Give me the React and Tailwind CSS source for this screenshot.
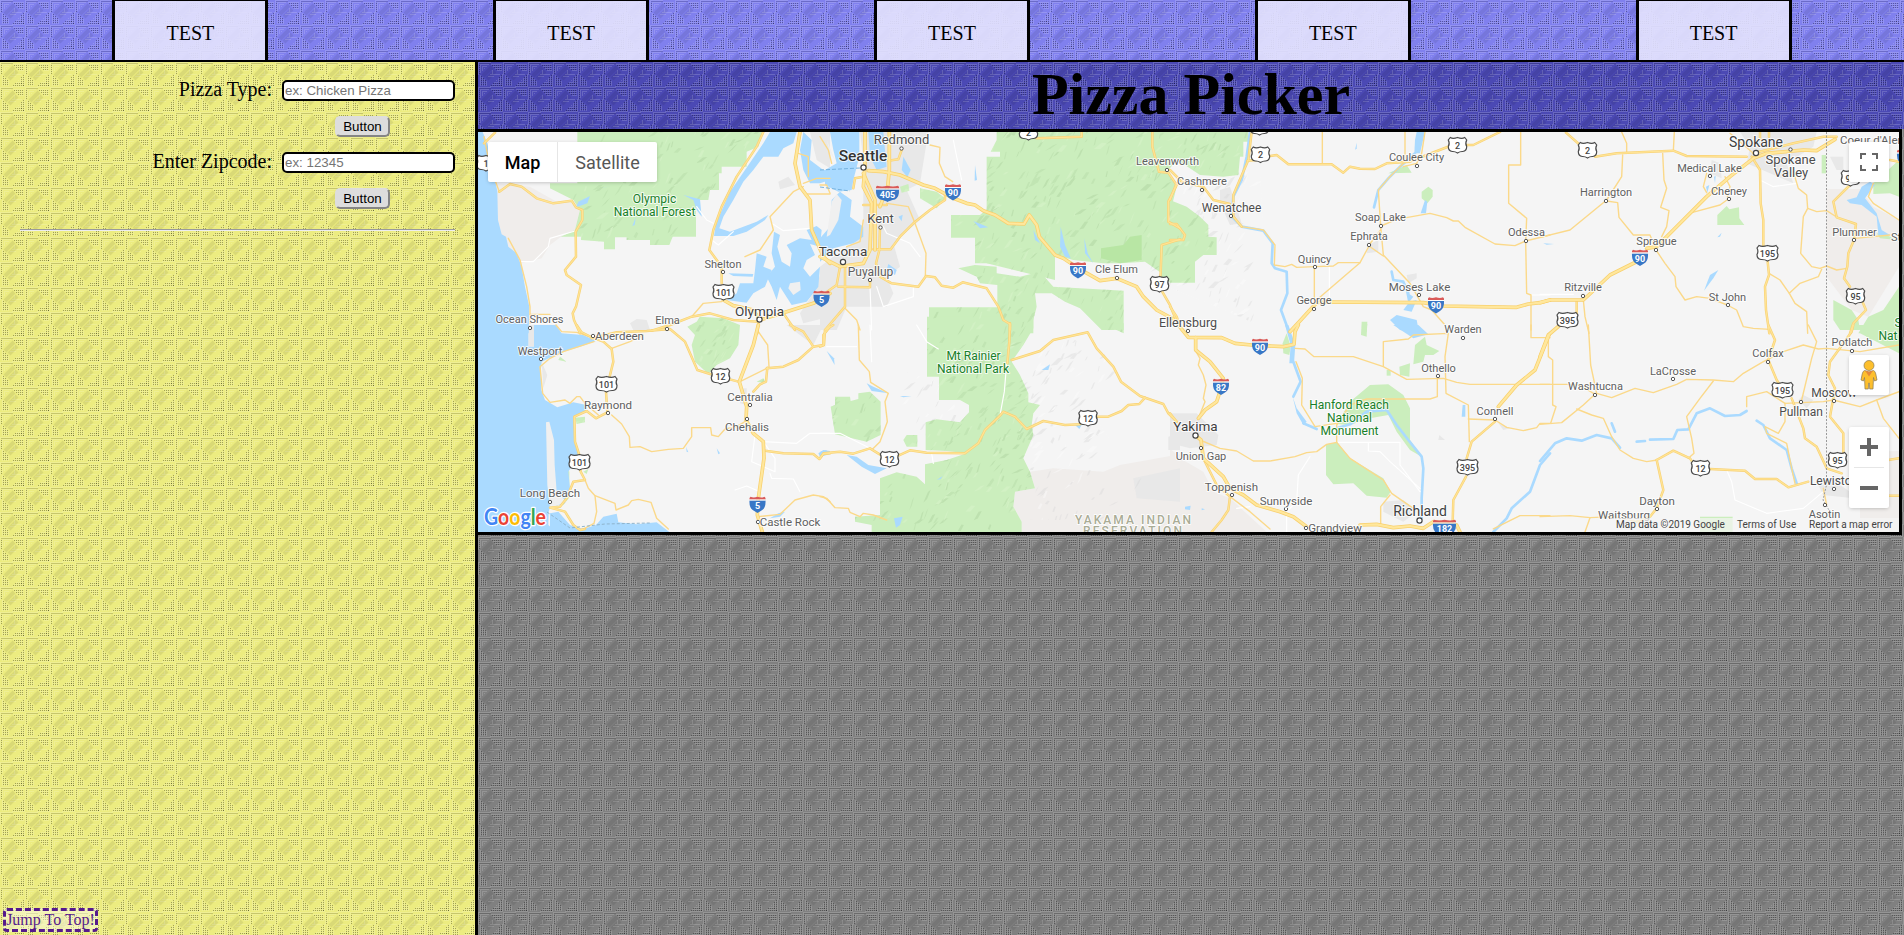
import React from "react";

// Map artwork is split into eight sheets; each sheet is drawn at 3x with its own origin.
const SHEETS = [
  {
    ox: 470, oy: 120,
    water: [
      "M0 36L38 36 52 70 70 150 82 215 84 300 95 343 108 350 115 380 140 400 155 440 165 500 178 560 176 640 0 640Z",
      "M900 36H980L970 70 940 85 925 110 880 110 850 150 820 185 790 240 760 290 748 325 780 335 860 305 895 285 885 300 830 335 790 348 732 348 738 310 780 215 825 150 880 70Z",
      "M912 335L930 345 922 380 935 425 960 440 965 400 950 375 990 355 1025 360 1010 330 1040 318 1055 330 1050 380 1020 372 1035 405 1010 420 1000 445 1020 470 1050 440 1045 500 1010 545 965 555 930 500 920 540 905 500 890 470 915 440 905 400Z",
      "M860 400L890 410 880 440 905 450 885 500 850 520 830 548 770 540 800 520 810 490 850 490 855 450Z",
      "M1000 36L1025 60 1020 120 1060 150 1080 150V180L1050 190 1020 190 1000 150 990 90Z",
      "M325 245L360 228 352 250 318 262Z", "M640 225L690 238 695 290 680 270 670 240Z", "M775 460L850 462 848 470 790 468Z",
      "M487 318L498 290 494 315Z", "M395 205L425 198 400 203Z",
    ],
    land: ["M960 490L990 485 992 510 970 525 955 505Z"],
    park: ["M322 36H880L865 80 830 95V140H755V160H747V210H720L715 240 678 240V350H608L598 375H540V360H470V352H435V388H402V365L333 360V350H272L315 330 330 270 310 240 240 205V190L322 190Z", "M965 460L990 445 1005 465 975 472Z"],
    tribe: ["M78 190L180 200 260 245 310 245 338 265 325 330 280 345 240 375 215 415 155 430 115 380 95 345 84 300Z"],
    urban: ["M1060 440L1080 430V590L1000 610 990 580 1030 520Z", "M925 185L955 170 975 195 930 208Z", "M480 610L500 597 530 600 540 630 490 630Z", "M1020 36L1080 36V145L1040 120Z"],
    high: ["M990 36L975 130 990 200 1020 240 1025 330 1060 410 1080 430", "M760 540L790 557 850 570 870 600 950 575 1030 550 1080 520"],
    major: ["M42 70L75 38", "M88 215L120 192 155 200 200 235 250 250 305 242 318 262 337 270V300L317 335 318 410 285 450 290 465 333 495 318 560 308 580 312 600 330 640", "M880 36L860 80 800 170 755 260 730 330 718 390 755 440V490", "M545 632L600 615 665 590 720 580 790 600 865 605", "M940 580L975 630", "M865 605L862 640"],
    minor: ["M42 50L60 140 88 215", "M115 355L150 420 170 500 180 560V610", "M825 410L870 390 910 330 900 290 970 215 1000 200", "M985 100L1015 110V170", "M1000 190L1040 175H1080", "M1010 222H1080", "M665 590L700 550 755 545", "M180 583L240 583"],
    local: ["M155 425L190 425 235 380 240 355 315 333", "M680 260L710 300 730 310", "M725 360L745 375 790 335", "M905 310L940 332 1020 325"],
  },
  {
    ox: 820, oy: 120,
    water: [
      "M30 36H118V110L100 180 95 210 55 215 15 195 15 150 50 130 40 90Z", "M0 355L30 320 35 240 60 215 95 240 90 290 130 320 130 350 100 370 40 385 0 425Z",
      "M145 36H190L195 90 200 140 170 150 150 110Z", "M250 110L272 150 262 172 245 150Z", "M722 320L735 375 752 415 735 410 720 380Z",
      "M793 355L803 400 820 430 795 400Z", "M460 303L505 322 480 325Z", "M235 290L248 284 245 304Z", "M205 432L230 450 225 465 200 450Z", "M640 330L660 370 645 360Z", "M465 135L471 180 464 182Z",
    ],
    land: ["M35 245L50 222 65 240 55 300 30 345 20 350Z", "M45 120L20 60 30 100Z"],
    park: [
      "M500 110H540V95H512L530 60V36H1080V110L1045 150 1070 200 1045 300 1080 320V360L1025 380V460L975 425 900 430 850 430 760 420 705 405V480L500 430V285Z",
      "M393 285H480L510 260V430H465V353H393Z",
      "M415 445L465 435 530 440 530 460 600 470 660 455 700 500 911 512V630H845L780 565 735 545 695 520 645 520 650 560 640 600V640H327V562H532V495L480 490 470 470Z",
      "M300 205L350 215 375 235 350 265 300 235Z", "M240 200L265 192 268 212 245 218Z", "M1022 375L1080 360V485H1022Z",
    ],
    dark: ["M843 385L910 375 930 350 965 345V420L900 430 843 415Z"],
    urban: ["M120 36H325L300 190 260 210 300 300 220 370 240 440 200 470 220 520 200 560 80 560 50 630 0 630V440L80 380 130 350V120Z"],
    high: ["M135 36V140L130 200 155 250 150 390 130 430 60 440 0 410", "M130 160L165 240V390", "M145 152L190 155 240 165 310 195 345 205 400 235 440 250 465 255 490 272 525 285 565 310 612 312 628 285 650 315 658 350 705 405 730 415 775 445 840 482 890 475 950 500 970 530 1010 570 1060 597", "M208 36V150L203 200 180 260"],
    major: ["M60 440L50 495 0 530", "M55 500L150 502V480", "M75 440V560L15 630", "M160 388L212 388 240 350 280 310 330 270 375 240V220", "M180 320L178 390 168 430 180 470 215 490 295 500 318 468 345 472 365 497 400 503 428 487 500 505 535 560 550 600 570 612V630", "M650 55L785 50V36", "M997 36V80L1017 155 1045 158 1070 195 1045 245V305L1080 325", "M1080 358L1025 375 1022 460 1018 500 1050 555 1068 600", "M130 170L105 175 100 205", "M130 255H200", "M205 122L235 118 245 90"],
    minor: ["M75 565L110 600 120 630", "M200 250L265 260 285 310 300 350 318 400 316 468", "M330 75L360 82 358 130 375 170 398 185", "M0 50L25 90 35 130", "M0 195H20L30 220", "M80 380L120 365 130 300"],
    local: ["M400 60L410 110 425 180", "M190 320L200 340 270 370 300 410", "M150 500L155 630", "M280 500V530L190 560 170 500"],
  },
  {
    ox: 1170, oy: 120,
    water: ["M740 36H765L750 100H733L735 60Z", "M660 600L680 585 740 600 748 640 690 630Z", "M765 240L772 245 768 280 752 280Z", "M555 90L560 68 560 85Z", "M708 515L730 530 718 545 740 540 725 575 700 570 715 550Z"],
    park: ["M0 36H235V65H220V110H210L205 165 160 170 90 165 0 105Z", "M0 240L50 260 90 290 115 315V350L140 352V405H100L75 425V488H0Z", "M755 215L775 200 788 210V230L772 250 755 235Z", "M655 160L710 135 725 158Z", "M585 615L592 612 590 635H583Z"],
    urban: ["M150 210L180 200 215 310 180 315 150 250Z", "M595 375L625 360V395L590 400Z", "M710 465L740 460V475L715 490Z"],
    river: ["M240 36L230 110 215 180 190 230 185 290 215 320 280 332 308 370 305 430 315 445 350 455 352 520 333 570 355 630", "M735 100L690 140 655 175 625 210 612 262", "M665 455L670 480 700 485 715 520"],
    high: ["M360 635L440 548 490 546 760 548 820 558 1040 562 1075 552 1110 548 1140 540"],
    major: ["M245 36L235 120 205 190 190 225 190 290 215 320", "M232 122L260 120", "M300 108L320 105 355 133H485L520 158 540 140 570 146 615 147 650 130 720 125 770 105 840 78", "M885 75L910 75 990 36", "M0 150L35 185 100 200 130 240 180 252", "M0 240L20 190", "M0 560L20 590 25 605", "M0 312H20L45 345 40 360H0"],
    minor: ["M457 36V130", "M705 36V125L655 175 625 210 632 318 640 405 720 490 760 560 785 570 825 615", "M765 36L755 100 740 130 700 140", "M1052 36V135H1016V250L1070 295 1067 365 1070 520 1083 525V630", "M640 315L680 298 780 280 830 293 850 303 865 303 885 322 975 372 1035 377 1067 363 1140 345", "M215 320L280 330 315 375 313 435 345 440 365 433 380 442 435 440 490 438 505 428 570 428 597 378 640 408", "M570 428L440 540", "M433 440V560", "M597 375L632 330"],
    local: ["M478 440V545", "M1083 525H1140"],
  },
  {
    ox: 1540, oy: 120,
    water: ["M990 185L1005 195 975 235 1010 280 1025 330 1050 345H1015L1010 290 965 255 930 250 920 240 950 232 965 200Z", "M492 512L510 465 535 450 520 475Z", "M498 200L508 195 502 218Z", "M522 170L527 168 525 190Z", "M532 352L545 338 540 350Z", "M10 370L42 372 20 374Z"],
    park: ["M532 285L560 258 568 268 597 262 598 295 613 315H532Z", "M1000 190L1077 120V230L1050 220 1000 222Z", "M880 540L935 570 955 600 960 630H900L880 600Z", "M955 640L985 590 1030 570 1077 500V700L960 640Z", "M845 105H858V160H845Z", "M1040 345L1010 340 1020 355 1070 360Z"],
    tribe: ["M860 207H960L1000 260 1077 300V440L985 590 935 570 860 470Z"],
    urban: ["M600 36H830L820 80 740 130 760 190 690 160 620 130 630 80Z", "M870 110H910V150L890 150Z", "M515 120L540 130 545 175 510 160Z"],
    high: ["M0 548L30 540 130 540 210 465 300 420", "M320 385L350 380 400 330 500 230 570 170 640 115 680 100 790 90 830 92 885 58"],
    major: ["M78 38L120 75", "M165 110L230 100 400 92 440 108 620 110", "M635 110L660 150 662 250 670 300V380", "M683 425L687 465 675 500 678 570 688 640", "M930 195L880 245 890 292 948 312 942 360 925 400 922 440 912 475 930 500", "M965 540L978 570 940 610 930 640", "M1050 120L1077 125", "M110 545V580", "M660 36V60", "M687 36V50", "M640 100L760 70 850 50 890 50"],
    minor: ["M403 36L400 92", "M245 36L260 70V100", "M248 105L245 170 200 240 90 330 0 352", "M200 243L233 248 237 292 280 345 330 345 348 390 375 430 405 470 408 500 435 540 470 530 510 535 562 555 590 570 610 620 640 625 690 628", "M368 100L372 180 380 205 362 262 387 272 380 320 365 350", "M565 237L540 255 455 278", "M555 170L570 200 562 230", "M500 160L490 200 500 218", "M760 155L775 205 800 225 803 265 790 290 782 400 815 440 840 445 860 438 890 450 920 445", "M803 265L830 275 860 272 885 288", "M687 460L720 480 748 520 780 490 835 470 845 448", "M748 520L765 550 800 575 803 640", "M945 355L1000 350 1050 345", "M1000 190L985 230 1000 250 1077 300", "M130 540L135 590 147 640", "M570 40L640 100"],
    local: ["M660 180L700 200 770 190", "M0 523H100"],
  },
  {
    ox: 470, oy: 325,
    water: ["M0 0H175V65H192V0H258L275 25 340 30 378 48 330 65 275 82 240 98 215 110 212 140 214 195 225 225 262 247 310 232 350 240 345 262 313 275 312 350 325 380 320 400 295 440 300 490 285 535 240 548 236 560 235 600 260 621H0Z", "M240 565L265 560 300 600 340 612 378 600 400 575 440 566 445 592 500 598 560 592 598 621H240Z", "M1045 385L1060 375 1080 378V388L1050 395Z", "M925 565L945 560 930 575 900 580Z", "M740 370L750 385 745 388Z", "M648 365L655 382 650 380Z"],
    land: ["M228 292L238 290 252 345 254 420 260 500 290 530 240 550 232 480Z"],
    park: ["M652 5L680 -10 690 -25 760 -20 810 0 805 60 780 100 740 120 715 147 675 110 665 60 675 30Z", "M315 278L345 275V292L320 297Z", "M232 300L240 298 248 340H232Z", "M275 415L298 440V485L275 450Z", "M255 520L300 515 280 540Z", "M860 170L880 160 888 175Z", "M340 440L355 432 350 447Z", "M270 95L290 110 265 105Z"],
    urban: ["M890 0H1060L1030 60 950 0Z", "M175 0H192V65H175Z", "M215 110L232 150 220 190Z", "M235 340H253L254 430H236Z", "M815 190H830V240L810 235Z"],
    high: ["M865 0L850 60 808 170 830 245 828 285 850 325 880 350 882 400 865 520 862 570 877 621"],
    major: ["M320 0L335 22 365 37 400 50 425 72 430 110 408 200 412 262 378 280 350 258 313 275 315 350 328 390 332 440 345 465 310 470 290 520 270 545 240 548 285 560 310 600 330 615 345 612", "M365 40L440 22 530 18 600 12 645 50 682 135 730 150 805 170", "M890 130L940 125 985 105 1030 65 1060 60V30L1080 5", "M1030 65L1000 20 960 0", "M850 200L870 178 888 170 892 128", "M885 377L940 385 1030 387 1048 402 1060 387 1080 385"],
    minor: ["M258 0L275 20 320 22 360 35", "M425 70L480 50 520 30", "M372 50L280 80 240 100 210 125 218 205 240 232 285 225 300 235 320 215 330 215 345 235 385 270", "M425 270L455 297 478 335 480 367 510 365 545 380 595 373 640 370 665 335V308H722L725 330 745 335 765 312 800 305 825 290", "M865 20L893 60 897 125", "M810 170L890 130", "M345 465L355 490 375 512 435 535 438 555 475 540 485 527 505 523 543 532 560 580 595 612", "M375 512L380 560 372 595 340 612", "M865 575L930 568 975 525 1030 510 1060 515 1080 530"],
    local: ["M855 330L845 410 915 440V400L880 350 980 355 1020 325H1080", "M795 495L830 483 870 500", "M900 445L905 460 970 462 990 500"],
  },
  {
    ox: 820, oy: 325,
    water: ["M80 390L110 395 145 420 200 430 165 447 125 425Z", "M222 580L248 575 240 600 228 608Z", "M0 380L20 375 18 385Z", "M665 135L690 118 685 135Z", "M765 300L785 300 778 312Z", "M140 175L160 185 205 205 155 198Z", "M240 213L275 214 250 217Z", "M20 78L42 100 44 120Z", "M350 465L368 453 362 462Z"],
    park: ["M321 -25H640V10L610 60 575 110 600 150 625 205V232L660 240 640 265 635 300 640 330 610 400 630 440 645 490 585 500 580 545 605 590V621H155V600L105 590V575L180 570V460L230 442 290 455 315 478V418L380 405 440 385 380 378 317 375V292L350 283 420 292 447 262V240L420 225H357V155H321Z", "M32 245L45 240V215H90L92 228 115 222V205L150 200 182 230V330L140 350 45 328Z", "M250 345L260 330H292V365L260 365Z", "M845 -5H911V25Z"],
    tribe: ["M630 440L700 430 850 440 900 420 1080 388V621H605V590L580 545 585 500 645 490Z"],
    urban: ["M1045 335L1080 325V375H1045Z", "M940 460L1080 430V530L950 520Z"],
    major: ["M0 400L10 385 60 380 100 386 150 370 190 395", "M235 392L270 376 320 383 435 385 475 355 495 315 540 272 550 260 585 275 620 312 670 288 735 300 780 298", "M832 275H865L905 258 925 240 958 237 975 218", "M570 -5L568 50 562 115", "M575 105L660 78 700 45 803 22 830 70 880 125 903 170 960 213 1030 237 1045 265 1070 290", "M0 65L12 60 15 15 40 0"],
    minor: ["M115 0L118 105 148 140 152 172 205 205 195 230 202 290 180 350 158 372", "M0 515L20 520 45 548 85 550 90 562 120 575 130 565 160 570 200 585"],
    local: ["M560 115L553 200 541 265", "M290 0L320 50 355 72", "M150 0L155 110", "M20 65H110", "M0 325H60L150 370", "M335 385L340 415"],
  },
  {
    ox: 1170, oy: 325,
    water: ["M670 0H745L775 28 730 40Z", "M345 0L355 0 376 60 372 115 358 115 362 60Z", "M368 215L380 250 410 290 400 300 380 265Z", "M45 545L62 542 60 555 45 553Z", "M95 550L105 553 95 556Z", "M878 240H886V275L875 275Z"],
    park: ["M468 358L502 352 540 400 640 460 662 500 650 518 590 512 550 475 490 478 468 450Z", "M500 297L540 230 600 180 655 178 700 210 720 250V345L755 395 720 375 680 320 655 270 600 280 540 300Z", "M338 55L350 25 362 65 358 90 340 85Z", "M735 60L765 35 770 60 808 78 790 90 765 90 760 110 730 118Z", "M688 125L720 115 718 155 690 150Z", "M650 135H662V152H650Z", "M575 -10L592 -10 590 35 573 30Z"],
    tribe: ["M0 370L30 400 100 440 130 500 180 520 290 621H0Z"],
    urban: ["M0 265L80 265 145 330 140 360 60 370 0 355Z", "M640 530L700 525 740 560 700 590 640 560Z", "M808 330L825 345 805 345Z", "M985 295L1020 310 1000 315Z"],
    river: ["M370 110L392 170 370 215", "M400 295L440 312", "M500 310L540 298 590 260 650 255 680 300 715 345 755 395 760 430 755 520 755 580", "M970 621L1010 580 1025 550 1080 500 1110 420 1140 385"],
    high: ["M25 0L55 37 155 38 195 55 245 60 340 65 372 58 375 20 385 0", "M77 38V75L120 110 160 160 145 215 140 230 105 255 85 280", "M75 330L93 345 100 400 160 455 180 490 220 510 260 540 330 560 370 575 410 605", "M570 600L620 598 670 608 720 603 760 610 790 590 860 600 870 621", "M1137 30L1095 135 1040 180 985 245"],
    major: ["M975 290L905 350 890 400", "M888 455L850 525 848 590", "M0 265L20 290", "M100 400L140 480 180 515 175 555 155 585 125 621"],
    minor: ["M90 345L150 370 200 378 250 408H300L375 395 410 383 440 380 470 358 500 352V300L540 240 590 222H780L802 215V160", "M500 352L540 400 640 465 665 505 730 550", "M375 70L405 72 432 95H550L640 125 710 163 820 160 860 172 900 178H1140", "M640 122V50L715 42 730 30 835 25 825 95 828 205 895 240 898 350", "M895 282L975 285 1010 307 1060 317 1100 308 1110 295H1140", "M1083 0V38H1140", "M378 110L397 160 395 240 435 305 500 295", "M660 510L632 545V600", "M180 515L240 560 300 612", "M970 612L1050 572H1140", "M75 75L90 100 85 120 100 150 108 180 100 220 105 230 85 280"],
    local: ["M505 352H690V420L750 500", "M595 352V378L630 380 660 410 750 490", "M420 395L385 450 380 530 350 560V621", "M200 550L240 545"],
  },
  {
    ox: 1540, oy: 325,
    park: ["M945 0H1077V20L990 45Z", "M480 575H578V621H480Z"],
    tribe: ["M960 380L1077 378V621H960Z"],
    urban: ["M775 225L790 210 820 225 800 250Z", "M830 470L870 460 930 500 940 520 850 510Z"],
    river: ["M0 408L45 355 80 340 125 347 170 330 215 340 240 368", "M215 295L225 320", "M290 350L315 348", "M330 344L400 342 412 315 445 313 470 265 510 250 555 273 600 270 620 258", "M650 287L670 300 690 340 740 375 755 430 770 475"],
    high: ["M60 0L25 30 0 95"],
    major: ["M350 405L370 495 350 550 330 575 290 590", "M350 405L400 377 450 400 460 415", "M510 432L615 437 645 462 710 462 745 487 805 470", "M685 0L705 45 685 105 710 165 720 180", "M755 220L790 310 795 340 830 365 860 430 905 445", "M940 0L935 20 870 110 865 150 885 190 870 275 910 325V385", "M1045 405L1077 400", "M1045 512H1077"],
    minor: ["M145 0L152 120 170 205 215 218 285 190 340 203 410 178 440 163 520 165 580 170 610 145 670 110 730 80 790 60 835 72 860 70 960 80 1077 60", "M0 178H80L120 180 165 208 130 240 65 293 0 298", "M25 30V95L38 105V240L48 245 32 295", "M110 252L155 270 190 280 215 335 240 375 280 400 320 410 352 405", "M520 168L480 220 440 275 455 340 462 385 445 400", "M620 245V215L680 200 735 235V290L715 325 675 305 680 325 740 355 755 430 765 475", "M735 235L850 230 880 225 960 245 1010 225 1077 200", "M805 0L830 50 815 100 785 225", "M0 575L90 572 150 578 220 575 290 590", "M150 578L135 621", "M1010 225L1030 280 1077 340", "M850 490L860 540"],
    local: ["M560 435L575 470 585 525 680 565 790 550 850 500"],
  },
];

// [text, x, baseline, size, dot x, dot y, tone]
const LABELS = [
  ["Seattle", 863, 161, 15.5, 863.5, 167.5, "city"],
  ["Redmond", 901.5, 143.5, 13, 901.5, 148.5, "town"],
  ["Kent", 880.5, 223, 13, 880.5, 227.5, "town"],
  ["Tacoma", 843, 256, 13.5, 843, 262, "big"],
  ["Puyallup", 870.5, 275.5, 12, 870, 280, "small"],
  ["Shelton", 723, 268, 11, 723, 272, "small"],
  ["Olympia", 759.5, 315.5, 13.5, 759.5, 319.5, "big"],
  ["Elma", 667.5, 324, 11, 667, 329, "small"],
  ["Ocean Shores", 529.5, 323, 11, 530, 328, "small"],
  ["Aberdeen", 619.5, 340, 11.5, 593, 336, "small"],
  ["Westport", 540, 355, 11, 541, 359, "small"],
  ["Raymond", 608, 409, 11.5, 608, 413, "small"],
  ["Long Beach", 550, 497, 11.5, 550, 502, "small"],
  ["Centralia", 750, 401, 11.5, 750, 405, "small"],
  ["Chehalis", 747, 431, 11.5, 747, 419, "small"],
  ["Castle Rock", 790, 526, 11.5, 758, 522, "small"],
  ["Leavenworth", 1167.5, 165, 11, 1167, 170, "small"],
  ["Cashmere", 1202, 185, 11, 1202, 190, "small"],
  ["Wenatchee", 1231.5, 211.5, 12, 1231, 216, "town"],
  ["Cle Elum", 1116.5, 273, 11, 1117, 278, "small"],
  ["Ellensburg", 1188, 327, 12.5, 1188, 331, "town"],
  ["Quincy", 1314.5, 263, 11, 1315, 267, "small"],
  ["George", 1314, 304, 11, 1314, 309, "small"],
  ["Coulee City", 1416.5, 161, 11, 1417, 166, "small"],
  ["Soap Lake", 1380.5, 221, 11, 1381, 226, "small"],
  ["Ephrata", 1369, 240, 11, 1369, 245, "small"],
  ["Moses Lake", 1419.5, 291, 11.5, 1419, 295, "small"],
  ["Odessa", 1526.5, 236, 11, 1526, 241, "small"],
  ["Warden", 1463, 333, 11, 1463, 338, "small"],
  ["Othello", 1438.5, 371.5, 11, 1438, 376, "small"],
  ["Harrington", 1606, 196, 11, 1606, 201, "small"],
  ["Medical Lake", 1709.5, 172, 11, 1710, 176, "small"],
  ["Cheney", 1729, 195, 11, 1729, 199, "small"],
  ["Sprague", 1656.5, 245, 11, 1656, 250, "small"],
  ["Ritzville", 1583, 291, 11, 1583, 296, "small"],
  ["St John", 1727.5, 301, 11, 1728, 305, "small"],
  ["Plummer", 1854.5, 236, 11, 1854, 240, "small"],
  ["Spokane", 1756, 147, 14, 1756, 153, "big"],
  ["Spokane", 1790.5, 164, 13, 1790.5, 149.5, "town"],
  ["Valley", 1791, 177, 13, 0, 0, "town"],
  ["Yakima", 1195.5, 431, 13.5, 1195.5, 435.5, "big"],
  ["Union Gap", 1201, 460, 11, 1201, 448, "small"],
  ["Toppenish", 1231.5, 491, 11.5, 1232, 495, "small"],
  ["Sunnyside", 1286, 505, 11.5, 1286, 509, "small"],
  ["Grandview", 1335, 532, 11.5, 1306, 528, "small"],
  ["Richland", 1420, 516, 14, 1419.5, 520.5, "big"],
  ["Connell", 1495, 415, 11, 1495, 419, "small"],
  ["Washtucna", 1595.5, 390, 11, 1595, 395, "small"],
  ["LaCrosse", 1673, 375, 11, 1673, 379, "small"],
  ["Colfax", 1768, 357, 11, 1768, 362, "small"],
  ["Potlatch", 1852, 346, 11, 1852, 351, "small"],
  ["Pullman", 1801, 415.5, 12, 1801, 402, "town"],
  ["Moscow", 1834, 396.5, 12, 1834, 401, "town"],
  ["Lewiston", 1834, 484.5, 12, 1834, 489, "town"],
  ["Asotin", 1824.5, 518, 11, 1825, 505, "small"],
  ["Dayton", 1657, 505, 11.5, 1657, 509, "small"],
  ["Waitsburg", 1624, 519, 11.5, 0, 0, "small"],
  ["Coeur d'Alene", 1875, 144, 11.5, 0, 0, "small"],
  ["St", 1896, 241, 11, 0, 0, "small"],
  ["Olympic", 654.5, 203, 12, 0, 0, "park"],
  ["National Forest", 654.5, 216, 12, 0, 0, "park"],
  ["Mt Rainier", 973.5, 360, 12, 0, 0, "park"],
  ["National Park", 973, 373, 12, 0, 0, "park"],
  ["Hanford Reach", 1349, 408.5, 12, 0, 0, "park"],
  ["National", 1349.5, 421.5, 12, 0, 0, "park"],
  ["Monument", 1349.5, 434.5, 12, 0, 0, "park"],
  ["Nat", 1888, 339.5, 12, 0, 0, "park"],
  ["S", 1898, 327, 12, 0, 0, "park"],
];

const TONES = {
  city: ["#333", 500],
  big: ["#3f3f3f", 400],
  town: ["#4d4d4d", 400],
  small: ["#606060", 400],
  park: ["#188028", 400],
};

const US_ROUTES = [
  ["1", 486, 163], ["101", 723.5, 292], ["101", 606.5, 384], ["101", 579.5, 462], ["12", 720.5, 376], ["12", 889.5, 459],
  ["12", 1088, 418], ["2", 1028.5, 132], ["97", 1159.5, 284], ["2", 1260.5, 154.5], ["2", 1457.5, 145], ["2", 1587.5, 150],
  ["395", 1567.5, 320], ["395", 1467.5, 467], ["195", 1767.5, 253], ["195", 1782.5, 390], ["95", 1850.5, 178], ["95", 1855.5, 296],
  ["95", 1837.5, 460], ["12", 1700.5, 468], ["97", 1259.5, 127],
];

const INTERSTATES = [
  ["5", 821.5, 298], ["405", 887.5, 193], ["90", 953, 191.5], ["90", 1078, 269.5], ["90", 1436, 304.5], ["90", 1640, 257],
  ["90", 1260, 346], ["82", 1221, 386], ["5", 757.5, 504], ["182", 1444.5, 527], ["90", 1905, 157],
];

function hills() {
  let seed = 11;
  const rnd = () => {
    seed = (seed * 1103515245 + 12345) % 2147483648;
    return seed / 2147483648;
  };
  const out = [];
  for (let i = 0; i < 1900; i += 1) {
    const x = 570 + rnd() * 680;
    const y = 132 + rnd() * 400;
    const len = 4 + rnd() * 11;
    const up = -0.3 - rnd() * 0.9;
    const dx = Math.cos(up) * len;
    const dy = Math.sin(up) * len;
    const fat = 1 + rnd() * 3;
    out.push([`M${x.toFixed(1)} ${y.toFixed(1)}l${(dx * 0.6).toFixed(1)} ${(dy * 0.6 - fat).toFixed(1)} ${(dx * 0.4).toFixed(1)} ${(dy * 0.4 + fat * 0.6).toFixed(1)} ${(-dx * 0.5).toFixed(1)} ${(-dy * 0.5 + fat).toFixed(1)}Z`, i % 3]);
  }
  return out;
}

const HILLS = hills();
const HILL_FILL = ["#aacf9b", "#dcf5cd", "#b3d8a4"];

const place = (s) => `translate(${s.ox} ${s.oy}) scale(0.33333)`;

function Shapes({ kind, ...rest }) {
  return (
    <g {...rest}>
      {SHEETS.map((s, i) => (
        <g key={i} transform={place(s)}>
          {(s[kind] || []).map((d, j) => <path key={j} d={d} />)}
        </g>
      ))}
    </g>
  );
}

function UsShield({ n, x, y }) {
  const w = n.length > 2 ? 10.5 : 9.2;
  return (
    <g transform={`translate(${x} ${y})`}>
      <path
        d={`M${-w + 2} -7.5Q${-w / 2} -5.8 0 -7.5Q${w / 2} -5.8 ${w - 2} -7.5L${w} -5Q${w - 1.8} -1.5 ${w} 1.5Q${w} 6 ${w - 4} 6.5Q2.5 6.3 0 8Q-2.5 6.3 ${-w + 4} 6.5Q${-w} 6 ${-w} 1.5Q${-w + 1.8} -1.5 ${-w} -5Z`}
        fill="#fff" stroke="#4a4a4a" strokeWidth="1.2"
      />
      <text y="3.6" textAnchor="middle" fontSize="9" fontWeight="500" fill="#444">{n}</text>
    </g>
  );
}

function Interstate({ n, x, y }) {
  const w = n.length > 2 ? 11.5 : 8;
  return (
    <g transform={`translate(${x} ${y})`}>
      <path d={`M${-w} -3.5H${w}Q${w + 0.5} 4 ${w - 4} 6.5Q2 7.5 0 9Q-2 7.5 ${-w + 4} 6.5Q${-w - 0.5} 4 ${-w} -3.5Z`} fill="#3877c6" />
      <path d={`M${-w} -4.4V-6L${-w + 1} -7.2Q${-w / 2} -5.6 0 -7.2Q${w / 2} -5.6 ${w - 1} -7.2L${w} -6V-4.4Z`} fill="#d95a58" />
      <path d={`M${-w} -4H${w}`} stroke="#fff" strokeWidth="0.8" />
      <text y="4.6" textAnchor="middle" fontSize="9" fontWeight="700" fill="#fff">{n}</text>
    </g>
  );
}

function MapArt() {
  return (
    <svg className="block h-[400px] w-[1421px] font-['Roboto',sans-serif]" viewBox="478 132 1421 400">
      <defs>
        <clipPath id="forest">
          {SHEETS.flatMap((s, i) => (s.park || []).map((d, j) => <path key={`${i}-${j}`} d={d} transform={place(s)} />))}
        </clipPath>
        <clipPath id="slopes">
          <path d="M1020 360L1045 345 1090 335 1120 375 1100 395 1090 410 1110 440 1080 470 1020 470 1030 430ZM1040 470H1150L1110 520 1030 520ZM1120 190L1260 170 1270 330 1200 300 1150 280ZM900 370L950 385 960 430 900 430Z" />
        </clipPath>
      </defs>
      <rect x="478" y="132" width="1421" height="400" fill="#f5f5f5" />
      <Shapes kind="tribe" fill="#f0edeb" />
      <Shapes kind="urban" fill="#e8e8e8" />
      <g clipPath="url(#slopes)" opacity="0.35">
        {HILLS.map(([d, k], i) => <path key={i} d={d} fill={k === 1 ? "#ffffff" : "#d5d5d5"} />)}
      </g>
      <Shapes kind="park" fill="#cbeebd" />
      <g clipPath="url(#forest)" opacity="0.42">
        {HILLS.map(([d, k], i) => <path key={i} d={d} fill={HILL_FILL[k]} />)}
      </g>
      <Shapes kind="dark" fill="#b8e6a4" />
      <Shapes kind="water" fill="#aadaff" />
      <Shapes kind="land" fill="#f0f0f0" />
      <g fill="none" strokeLinejoin="round" strokeLinecap="round">
        <Shapes kind="river" stroke="#aadaff" strokeWidth="8" />
        <Shapes kind="local" stroke="#ffffff" strokeWidth="3.5" />
        <Shapes kind="minor" stroke="#fbd98a" strokeWidth="4.2" />
        <Shapes kind="major" stroke="#f8d277" strokeWidth="7.5" />
        <Shapes kind="major" stroke="#ffe495" strokeWidth="3.5" />
        <Shapes kind="high" stroke="#f8d06e" strokeWidth="11" />
        <Shapes kind="high" stroke="#ffe79c" strokeWidth="6.5" />
      </g>
      <path d="M1826.5 132V485L1823 500 1829 510" fill="none" stroke="#999" strokeDasharray="2 1.5" />
      <path d="M547 512L570 528 605 524 650 523" fill="none" stroke="#8fb4cc" strokeDasharray="3 2" />
      <path d="M820 170L860 168M820 187L850 191" fill="none" stroke="#76b3df" strokeDasharray="4 2" />
      {US_ROUTES.map(([n, x, y], i) => <UsShield key={i} n={n} x={x} y={y} />)}
      {INTERSTATES.map(([n, x, y], i) => <Interstate key={i} n={n} x={x} y={y} />)}
      {LABELS.map(([t, x, y, size, dx, dy, tone], i) => (
        <g key={i}>
          {dx > 0 && <circle cx={dx} cy={dy} r={size > 13 ? 2.6 : 1.7} fill="#fff" stroke="#444" strokeWidth={size > 13 ? 1.2 : 0.9} />}
          <text x={x} y={y} textAnchor="middle" fontSize={size} fontWeight={TONES[tone][1]} fill={TONES[tone][0]} stroke="#fff" strokeWidth="2" strokeOpacity="0.8" strokeLinejoin="round" paintOrder="stroke">{t}</text>
        </g>
      ))}
      <g fill="#a9ab95" fontSize="12" fontWeight="500" stroke="#fff" strokeWidth="1.5" paintOrder="stroke">
        <text x="1075" y="524" textLength="116">YAKAMA INDIAN</text>
        <text x="1083" y="535" textLength="99">RESERVATION</text>
      </g>
      <text x="484" y="524.5" textLength="62" lengthAdjust="spacingAndGlyphs" fontSize="22" className="font-['Lato',sans-serif]" stroke="#fff" strokeWidth="2.5" strokeLinejoin="round" paintOrder="stroke" fontWeight="700">
        <tspan fill="#4285f4">G</tspan><tspan fill="#ea4335">o</tspan><tspan fill="#fbbc05">o</tspan><tspan fill="#4285f4">g</tspan><tspan fill="#34a853">l</tspan><tspan fill="#ea4335">e</tspan>
      </text>
    </svg>
  );
}

// Woven tile: nested light corners either side of a plain diagonal, with dark stitches.
function Weave({ id }) {
  return (
    <svg className="pointer-events-none absolute inset-0 h-full w-full" aria-hidden="true">
      <defs>
        <pattern id={id} width="25" height="25" patternUnits="userSpaceOnUse">
          <g fill="none" stroke="#fff" strokeOpacity="0.17">
            <path d="M.5 13V.5H13M2.5 11V2.5H11M4.5 9V4.5H9M6.5 7V6.5H7" />
            <path d="M24.5 12V24.5H12M22.5 14V22.5H14M20.5 16V20.5H16M18.5 18V18.5H18" />
            <path d="M13 2.5H24M15 4.5H24M17 6.5H24M19 8.5H24M2.5 13V24M4.5 15V24M6.5 17V24M8.5 19V24" />
            <path d="M12 12.5H22M10 14.5H16M14.5 8V12" />
          </g>
          <g fill="none" stroke="#000" strokeOpacity="0.32" strokeDasharray="1 1">
            <path d="M1.5 1.5H13M1.5 3V13M14 3.5H24M16 5.5H24M3.5 14V24M5.5 16V24" />
            <path d="M23.5 13V24M13 23.5H24M21.5 15V22M15 21.5H22M18 7.5H24M7.5 18V24" />
          </g>
          <path d="M5 14L14 5M9 17L17 9" stroke="#000" strokeOpacity="0.08" strokeWidth="4" />
        </pattern>
      </defs>
      <rect width="100%" height="100%" fill={`url(#${id})`} />
    </svg>
  );
}

function Field({ label, hint }) {
  return (
    <>
      <div className="flex h-[21px] items-center justify-end gap-[10px]">
        <label className="relative -top-px text-[20px] leading-[21px]">{label}</label>
        <input placeholder={hint} className="h-[21px] w-[173px] rounded-[5px] border-2 border-black bg-white px-px font-['Liberation_Sans',sans-serif] text-[13.333px] placeholder:text-[#757575]" />
      </div>
      <button className="mt-[15px] mr-[65px] mb-[15px] block h-[21px] w-[55px] rounded-[5px] border-2 border-t-[#ddd] border-r-[#858585] border-b-[#858585] border-l-[#ddd] bg-[#ddd] text-center font-['Liberation_Sans',sans-serif] text-[13.333px] leading-[17px]">
        Button
      </button>
    </>
  );
}

export default function App() {
  return (
    <div className="relative flex h-[935px] w-[1904px] flex-col overflow-hidden bg-[#808080] font-['Liberation_Serif',serif] text-black">
      <nav className="relative grid h-[62px] shrink-0 grid-cols-5 border-b-2 border-black bg-[#8080ee]">
        <Weave id="weave-nav" />
        {[0, 1, 2, 3, 4].map((i) => (
          <div key={i} className="relative mx-auto flex h-[60px] w-[156px] items-center justify-center border-x-3 border-t border-black bg-[#e4e3fd]/90 pt-[5px] text-[20px]">
            TEST
          </div>
        ))}
      </nav>
      <div className="flex min-h-0 flex-1">
        <aside className="relative w-[478px] shrink-0 border-r-3 border-black bg-[#ecec80]">
          <Weave id="weave-side" />
          <div className="relative flex h-full flex-col pt-[18px]">
            <div className="flex flex-col items-end px-5">
              <Field label="Pizza Type:" hint="ex: Chicken Pizza" />
              <Field label="Enter Zipcode:" hint="ex: 12345" />
              <div className="mt-[5px] h-[2px] w-full border-t border-[#9a9a9a] bg-[#eee]" />
            </div>
            <a className="mt-auto mb-[3px] ml-[3px] flex h-[24px] w-[95px] items-center justify-center rounded-[4px] border-3 border-dashed border-[#551a8b] bg-white/40 text-[16px] leading-[18px] whitespace-nowrap text-[#551a8b]">
              Jump To Top!
            </a>
          </div>
        </aside>
        <main className="relative flex flex-1 flex-col">
          <Weave id="weave-main" />
          <header className="relative flex h-[67px] items-center justify-center bg-[#4b49b4]">
            <Weave id="weave-head" />
            <h1 className="relative -top-px text-[60px] leading-[67px] font-bold">Pizza Picker</h1>
          </header>
          <section className="relative h-[406px] w-[1424px] border-y-3 border-r-3 border-black">
            <MapArt />
            <div className="absolute top-[10px] left-[10px] flex h-[40px] w-[169px] items-center rounded-[2px] bg-white font-['Roboto',sans-serif] text-[18px] shadow-[0_1px_4px_-1px_rgba(0,0,0,0.3)]">
              <div className="flex h-full w-[70px] items-center justify-center border-r border-[#e6e6e6] font-medium">Map</div>
              <div className="flex-1 text-center text-[#565656]">Satellite</div>
            </div>
            <div className="absolute top-[10px] right-[10px] flex h-[40px] w-[40px] items-center justify-center rounded-[2px] bg-white shadow-[0_1px_4px_-1px_rgba(0,0,0,0.3)]">
              <svg className="size-[18px]" viewBox="0 0 18 18" fill="#666"><path d="M0 0v6h2V2h4V0zM12 0v2h4v4h2V0zM16 16h-4v2h6v-6h-2zM2 12H0v6h6v-2H2z" /></svg>
            </div>
            <div className="absolute top-[223px] right-[10px] flex h-[40px] w-[40px] items-center justify-center rounded-[2px] bg-white shadow-[0_1px_4px_-1px_rgba(0,0,0,0.3)]">
              <svg className="h-[30px] w-[18px]" viewBox="0 0 18 30" stroke="#8a7a55" strokeWidth="0.7">
                <path d="M4.5 10.5L9 12 13.5 10.5Q15.2 11 15.8 14L17 20 14.5 21 13.5 17.5 13 29H9.7L9.3 23H8.7L8.3 29H5L4.5 17.5 3.5 21 1 20 2.2 14Q2.8 11 4.5 10.5Z" fill="#fdbf2d" />
                <circle cx="9" cy="5.5" r="5" fill="#fdbf2d" />
                <path d="M5 10.5L9 16.5 13 10.5 9 11.8Z" fill="#e5883a" stroke="none" />
              </svg>
            </div>
            <div className="absolute top-[295px] right-[10px] flex h-[81px] w-[40px] flex-col items-center rounded-[2px] bg-white shadow-[0_1px_4px_-1px_rgba(0,0,0,0.3)]">
              <svg className="my-[11px] size-[18px]" viewBox="0 0 18 18" fill="#666"><path d="M7 0h4v7h7v4h-7v7H7v-7H0V7h7z" /></svg>
              <div className="h-px w-[30px] bg-[#e6e6e6]" />
              <svg className="my-[11px] size-[18px]" viewBox="0 0 18 18" fill="#666"><path d="M0 7h18v4H0z" /></svg>
            </div>
            <div className="absolute right-0 bottom-0 flex h-[14px] items-center gap-[12px] bg-[#f5f5f5]/70 pr-[6px] pl-[6px] font-['Roboto',sans-serif] text-[10px] leading-[14px] text-[#444]">
              <span className="w-[109px] whitespace-nowrap">Map data ©2019 Google</span>
              <span className="w-[60px] whitespace-nowrap">Terms of Use</span>
              <span className="w-[84px] whitespace-nowrap">Report a map error</span>
            </div>
          </section>
        </main>
      </div>
    </div>
  );
}
